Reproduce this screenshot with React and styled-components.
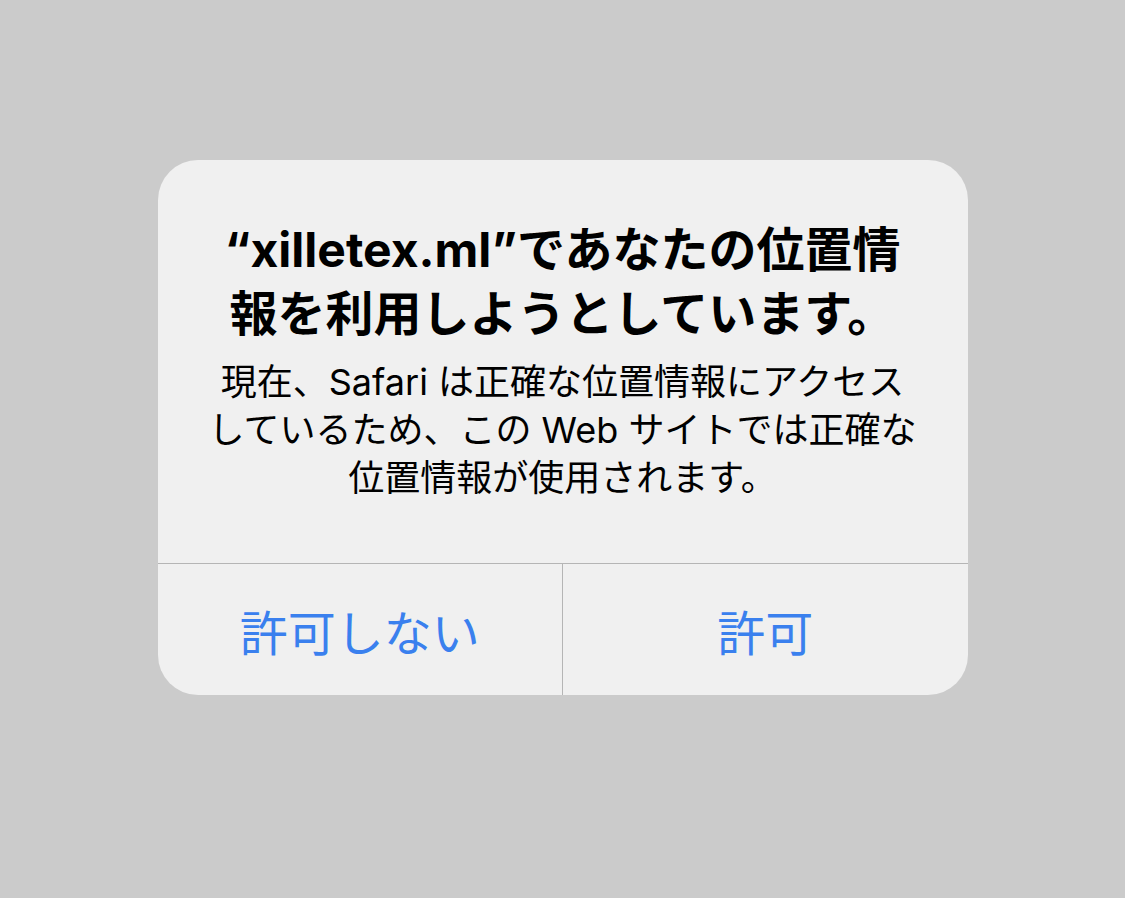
import React from "react";
import styled, { createGlobalStyle } from "styled-components";

const GlobalStyle = createGlobalStyle`
  html, body {
    margin: 0;
    padding: 0;
    background: #cbcbcb;
  }
`;

const Screen = styled.div`
  width: 1125px;
  height: 898px;
  background: #cbcbcb;
  display: flex;
  justify-content: center;
  align-items: flex-start;
  padding-top: 160px;
  box-sizing: border-box;
  font-family: "Inter", "Noto Sans CJK JP", sans-serif;
`;

const Alert = styled.div`
  width: 810px;
  background: #f0f0f0;
  border-radius: 40px;
  overflow: hidden;
  display: flex;
  flex-direction: column;
`;

const Content = styled.div`
  padding: 58px 30px 61px;
  display: flex;
  flex-direction: column;
  align-items: center;
  gap: 12px;
  text-align: center;
  color: #000;
`;

const Title = styled.div`
  font-size: 48px;
  font-weight: 700;
  line-height: 64px;
`;

const Message = styled.div`
  font-size: 36px;
  font-weight: 400;
  line-height: 48px;
`;

const Line = styled.span`
  display: block;
  white-space: nowrap;
`;

const Actions = styled.div`
  display: flex;
  border-top: 1px solid #b5b5b5;
  height: 131px;
`;

const Action = styled.button`
  flex: 1;
  background: none;
  border: none;
  border-left: ${(p) => (p.divided ? "1px solid #b5b5b5" : "none")};
  padding: 0;
  margin: 0;
  font-family: "Noto Sans CJK JP", sans-serif;
  font-size: 48px;
  font-weight: 400;
  color: #3a80ee;
  display: flex;
  align-items: center;
  justify-content: center;
`;

export default function App() {
  return (
    <>
      <GlobalStyle />
      <Screen>
        <Alert>
          <Content>
            <Title>
              <Line>“xilletex.ml”であなたの位置情</Line>
              <Line>報を利用しようとしています。</Line>
            </Title>
            <Message>
              <Line>現在、Safari は正確な位置情報にアクセス</Line>
              <Line>しているため、この Web サイトでは正確な</Line>
              <Line>位置情報が使用されます。</Line>
            </Message>
          </Content>
          <Actions>
            <Action>許可しない</Action>
            <Action divided>許可</Action>
          </Actions>
        </Alert>
      </Screen>
    </>
  );
}
